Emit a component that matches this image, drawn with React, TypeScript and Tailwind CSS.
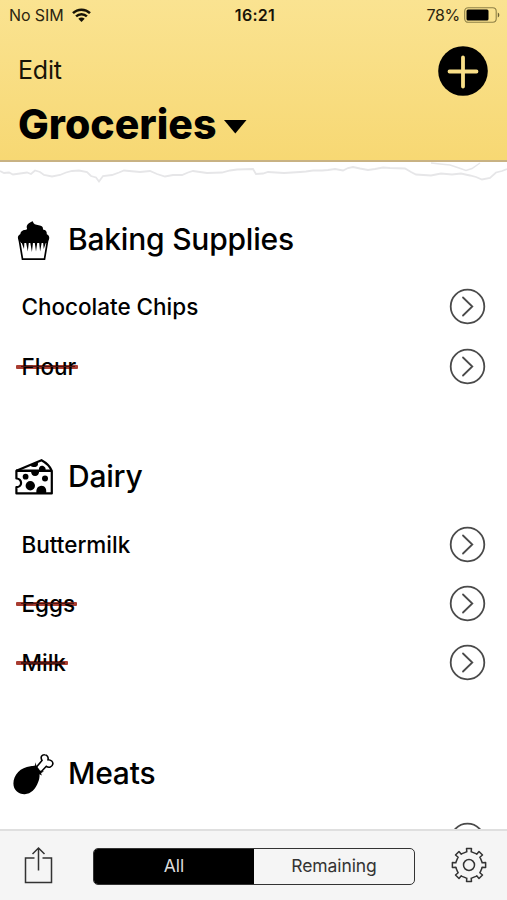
import { useState } from "react";
import type { ReactNode } from "react";

type Item = { id: string; name?: string; done?: boolean };
type Section = { title: string; icon: ReactNode; items: Item[] };

function CupcakeIcon() {
  return (
    <svg width="42" height="42" viewBox="0 0 42 42">
      <path d="M6.500 22L9.500 40.200h22L34.500 22z" fill="#fff" stroke="#000" strokeWidth="1.700" />
      <path d="M19.800 2.300C16 3.500 12.800 6.200 14 9.500c.2.700-.2 1-1 1.200-3 .2-5.500 1.500-5.600 4.300C5.300 16 4.600 17.800 5 19.500c.2 1.800 1 3 3 3h25c2 0 3-1.200 3.200-3 .3-1.700-.5-3.500-2.400-4.300.2-2.800-1.300-4.300-3.800-4.600.4-2.800-1.300-4.200-4.300-4.400-2.900-.2-5.500-1.200-5.900-3.900z" />
      <path d="M8 22h3.500l-.5 8zM12.800 22h3.200l-1.200 10.500zM17 22h3.200l-1.300 11zM21.500 22h3l-1.500 10.500zM26 22h3l-1.900 10.500zM30 22h3.500l-2.800 8z" />
      <path d="M8 22h26v2H8z" />
    </svg>
  );
}

function CheeseIcon() {
  return (
    <svg width="42" height="42" viewBox="0 0 42 42">
      <path d="M3.400 14.800L28.500 4.200c4.800 2.600 8.600 6.300 10.300 10.600V37.400H3.400v-6.200c2.700 0 4.700-1.700 4.700-4.200s-2-4.700-4.700-4.500z" fill="#fff" stroke="#000" strokeWidth="2.200" strokeLinejoin="round" />
      <path d="M3 14.800h36" stroke="#000" strokeWidth="2.400" />
      <path d="M17.500 9.500l7-3.500c1.300 2.800 0 5-2.900 5-1.800 0-3.600-.5-4.100-1.500zM26 14c-.5-2.500 1-4.200 2.900-4.200s4.200 1.700 3.700 4.200zM18 15h8.200c0 3-1.500 5.100-4.100 5.100S18 18 18 15z" />
      <circle cx="12.600" cy="20.700" r="2.900" />
      <circle cx="32" cy="22.600" r="3" />
      <circle cx="17.300" cy="29.700" r="4.700" />
      <path d="M23.500 37.300c-.9-3.800 1.300-7.500 5-7.500 3.500 0 5.500 3.500 4.500 7.500z" />
    </svg>
  );
}

function DrumstickIcon() {
  return (
    <svg width="42" height="42" viewBox="0 0 42 42">
      <path d="M23.500 14L29 7.500c-2-3.500 0-6 2.700-5.800 2.500.1 3.900 2.600 3.300 5 3 .1 5.300 1.900 4.800 4.500-.6 2.800-3.900 4.100-6.500 2.100L27.500 19.500" fill="#fff" stroke="#000" strokeWidth="1.600" />
      <path d="M.4 30.500C.5 21.500 7.500 14.300 17.500 13.200c2-.1 3-.2 4.600-.6l.2-3.300 1.200 3.500 1.500 2 2 2.700 4 1.300-3 .9.800 2.800-2.300-1.300c.2 2.600-.2 5.500-1.400 8.100C22.500 36 18 41 11.800 41.200 5.800 41.400.4 37.200.4 30.500z" />
    </svg>
  );
}

const SECTIONS: Section[] = [
  {
    title: "Baking Supplies",
    icon: <CupcakeIcon />,
    items: [{ id: "chips", name: "Chocolate Chips" }, { id: "flour", name: "Flour", done: true }],
  },
  {
    title: "Dairy",
    icon: <CheeseIcon />,
    items: [
      { id: "buttermilk", name: "Buttermilk" },
      { id: "eggs", name: "Eggs", done: true },
      { id: "milk", name: "Milk", done: true },
    ],
  },
  {
    title: "Meats",
    icon: <DrumstickIcon />,
    items: [{ id: "empty" }],
  },
];

const FILTERS = ["All", "Remaining"];

// outline of the eight-toothed settings wheel, centred on 0,0
function gearPath() {
  const points: string[] = [];
  const profile = [[-13.500, 13.300], [-9.500, 13.300], [-8.500, 16.800], [8.500, 16.800], [9.500, 13.300], [13.500, 13.300]];
  for (let tooth = 0; tooth < 8; tooth++) {
    for (const [offset, radius] of profile) {
      const angle = ((tooth * 45 + offset - 90) * Math.PI) / 180;
      points.push(`${(Math.cos(angle) * radius).toFixed(2)} ${(Math.sin(angle) * radius).toFixed(2)}`);
    }
  }
  return `M${points.join("L")}Z`;
}

function StatusBar() {
  return (
    <div className="flex h-[30px] items-center justify-between pl-[9px] pr-[7px] text-[16px] text-[#2c2510]">
      <div className="flex w-[120px] items-center gap-[8px]">
        <span className="tracking-[-0.1px]">No SIM</span>
        <svg width="19" height="14" viewBox="0 0 19 14" fill="none" stroke="#171307" strokeWidth="2.500">
          <path d="M1 5.200C5.700.6 13.300.6 18 5.200M4.100 8.300c3-2.900 7.800-2.900 10.800 0" />
          <path d="M6.300 10.800c1.800-1.700 4.600-1.700 6.400 0L9.500 14z" fill="#171307" stroke="none" />
        </svg>
      </div>
      <span className="ml-[1px] font-semibold tracking-[0.3px] text-[#171307]">16:21</span>
      <div className="flex w-[120px] items-center justify-end gap-[4px]">
        <span className="tracking-[-0.3px]">78%</span>
        <svg width="36" height="16" viewBox="0 0 36 16">
          <rect x=".7" y=".7" width="31.500" height="14.600" rx="3.500" fill="none" stroke="#8f8147" strokeWidth="1.100" />
          <rect x="2.500" y="2.500" width="22" height="11" rx="1.500" />
          <path d="M33.800 5.500c2 .8 2 4.200 0 5z" fill="#6b6033" />
        </svg>
      </div>
    </div>
  );
}

function ListItem({ item }: { item: Item }) {
  return (
    <li className="flex h-[59.33px] items-center justify-between pl-[16px] pr-[21px]">
      <span className="relative pl-[5.500px] pr-[2px] pt-[1px] text-[22.500px] font-medium leading-[30px] tracking-[-0.02px]">
        {item.done && <span className="absolute inset-x-0 top-[14px] h-[4px] rounded-[1px] bg-[#a93d31]" />}
        <span className="relative">{item.name}</span>
        {item.done && <span className="absolute left-[5px] right-[3px] top-[15px] h-[1.500px] bg-[#4a1713]" />}
      </span>
      <svg width="37" height="37" viewBox="0 0 37 37" fill="none" stroke="#4a4a4a" strokeWidth="1.800">
        <circle cx="18.500" cy="18.500" r="16.800" />
        <path d="M14 9.500l9.300 9-9.300 9" strokeLinecap="round" />
      </svg>
    </li>
  );
}

export default function App() {
  const [filter, setFilter] = useState("All");

  return (
    <div className="flex h-[900px] w-[507px] flex-col overflow-hidden bg-white font-['Inter','Liberation_Sans',sans-serif] text-black">
      {/* Header */}
      <header className="h-[162px] shrink-0 border-b-2 border-[#c8b283] bg-linear-to-b from-[#fae391] to-[#f7d873]">
        <StatusBar />
        <div className="flex justify-between pl-[18px] pr-[19px]">
          <div className="pt-[23px]">
            <button className="block text-[25px] leading-[34px] tracking-[-0.2px] text-[#171307]">Edit</button>
            <button className="mt-[13px] flex items-center gap-[8px]">
              <h1 className="text-[41px] font-extrabold leading-[48px]">Groceries</h1>
              <svg width="23" height="14" viewBox="0 0 23 14" className="mt-[6px]">
                <path d="M0 0h22.500L11.300 13.500z" />
              </svg>
            </button>
          </div>
          <button className="mt-[16px] h-[50px] w-[50px]" aria-label="Add item">
            <svg width="50" height="50" viewBox="0 0 50 50">
              <circle cx="25" cy="25" r="24.800" />
              <path d="M25 11.500v29M11.500 25.500h27" stroke="#f9df88" strokeWidth="3.800" strokeLinecap="round" />
            </svg>
          </button>
        </div>
      </header>

      {/* List */}
      <main className="relative min-h-0 flex-1 overflow-hidden">
        <svg width="507" height="24" viewBox="0 0 507 24" fill="none" stroke="#e6e6e8" strokeWidth="1.800" className="absolute left-0 top-0">
          <path d="M0 9L4 11L9 10.500L13 12.500L20 11.500L27 10.500L31 12L35 8.500L40 10L44 13L52 14.500L60 13L66 10.500L72 9L79 8.500L87 10L91 14L96 15.500L99 19.500L103 14L112 13L119 10.500L124 8.500L140 10L150 9L157 12L165 14.500L173 13L182 13L188 10.500L193 9L200 10L207 11L222 10.500L230 8.500L237 7.500L253 7L256 12L263 11.500L268 10L284 11L300 10L306 9.500L313 8.500L322 8.500L328 8L335 7L343 8.500L348 6L353 5L360 6.500L368 8L375 7L383 5.500L390 6L405 6.500L411 10L416 12.500L431 13.500L441 11.500L452 12.500L461 11.500L470 13.500L476 15L482 17.500L490 16L496 10.500L502 9L507 7" />
          <path d="M431 1L440 2L450 3L459 6L466 8.500L472 6.500L480 1" strokeWidth="1.400" />
        </svg>
        <div className="-mt-[3.500px]">
          {SECTIONS.map((section) => (
            <section key={section.title}>
              <div className="flex h-[118.670px] items-end gap-[13px] pb-[16.500px] pl-[13px]">
                {section.icon}
                <h2 className="mb-[0.500px] text-[30px] font-medium leading-[42px] tracking-[-0.22px]">{section.title}</h2>
              </div>
              <ul>
                {section.items.map((item) => (
                  <ListItem key={item.id} item={item} />
                ))}
              </ul>
            </section>
          ))}
        </div>
      </main>

      {/* Toolbar */}
      <footer className="flex h-[71px] shrink-0 items-center justify-between border-t-2 border-[#dfdfdf] bg-[#f5f5f5] pl-[24px] pr-[20px]">
        <button aria-label="Share" className="-mt-[4px]">
          <svg width="29" height="40" viewBox="0 0 29 40" fill="none" stroke="#333" strokeWidth="1.500">
            <path d="M10.500 14H1.500v24.500h26V14H18.500M14.500 26.500V4M8.500 10l6-6 6 6" />
          </svg>
        </button>
        <div className="ml-[4px] mt-[2px] flex h-[37px] w-[322px] overflow-hidden rounded-[5px] border-[1.500px] border-[#333]">
          {FILTERS.map((name) => (
            <button
              key={name}
              onClick={() => setFilter(name)}
              className={`flex-1 text-[17.500px] tracking-[-0.1px] ${filter === name ? "bg-black text-[#ddd]" : "text-[#333]"}`}
            >
              {name}
            </button>
          ))}
        </div>
        <button aria-label="Settings" className="-mt-[2px]">
          <svg width="36" height="36" viewBox="-18 -18 36 36" fill="none" stroke="#333" strokeWidth="1.500">
            <path d={gearPath()} strokeLinejoin="round" />
            <circle r="5.500" />
          </svg>
        </button>
      </footer>
    </div>
  );
}
